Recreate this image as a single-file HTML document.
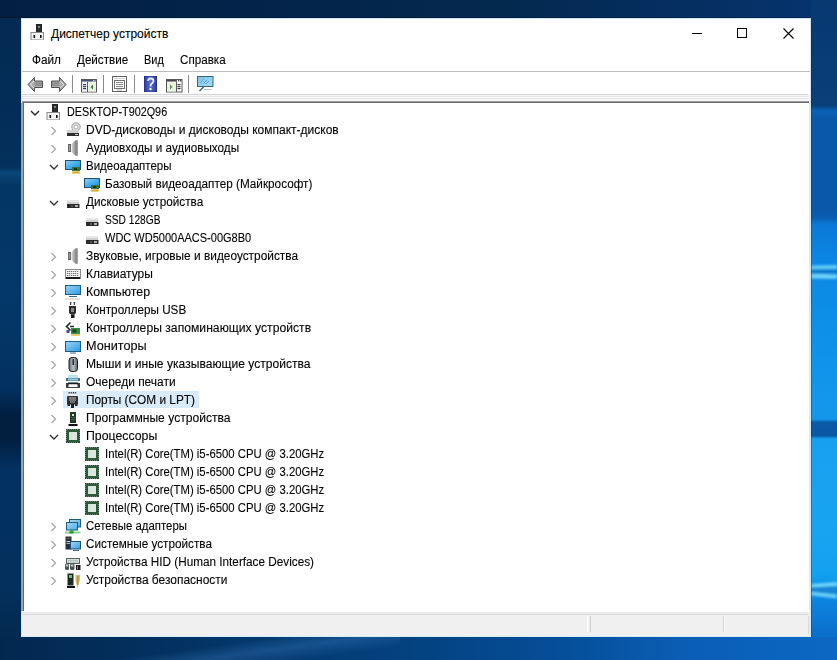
<!DOCTYPE html>
<html><head><meta charset="utf-8"><style>
html,body{margin:0;padding:0;width:837px;height:660px;overflow:hidden;background:#06305c;font-family:"Liberation Sans", sans-serif;}
span{-webkit-text-stroke:0.1px #000}
.a{position:absolute}
svg{display:block}
</style></head><body>
<div class="a" style="left:0;top:0;width:837px;height:660px;background:#05305c"></div>
<div class="a" style="left:0;top:0;width:837px;height:18px;background:linear-gradient(90deg,#032043 0%,#03244b 35%,#04294f 60%,#063470 100%)"></div>
<div class="a" style="left:0;top:17px;width:837px;height:1px;background:rgba(0,0,0,0.25)"></div>
<div class="a" style="left:0;top:18px;width:21px;height:619px;background:linear-gradient(180deg,#032a52 0%,#03305c 24%,#0a4678 25%,#043664 27%,#04386a 45%,#03315f 60%,#021f40 64%,#021f40 68%,#033262 73%,#03305c 92%,#032a50 100%)"></div>
<div class="a" style="left:811px;top:0;width:26px;height:660px;background:linear-gradient(180deg,#083870 0%,#08407a 16%,#0a62b8 16.8%,#0a58aa 18%,#0a58aa 32%,#0a5eb4 33%,#0a78d8 34%,#0c88e4 40%,#0e94ea 55%,#1398ec 63.5%,#0a5aa8 64%,#0a58a4 66%,#18a0f0 66.5%,#18a4f0 80%,#12a0f0 87%,#0c84e0 91%,#0a70cc 96%,#0a68c4 100%)"></div>
<svg class="a" style="position:absolute;left:811px;top:255px" width="26" height="30" viewBox="0 0 26 30"><defs><filter id="bl" x="-20%" y="-50%" width="140%" height="200%"><feGaussianBlur stdDeviation="0.8"/></filter></defs>
<g filter="url(#bl)"><path d="M0 10.5 L26 10 L26 14 L0 14.5 Z" fill="#6cd0fa" opacity="0.9"/><path d="M0 18.5 L26 19.5 L26 24 L0 23.5 Z" fill="#78d8fc" opacity="0.9"/><rect x="0" y="14.5" width="26" height="4" fill="#0a6ab8" opacity="0.5"/></g></svg>
<svg class="a" style="position:absolute;left:811px;top:575px" width="26" height="30" viewBox="0 0 26 30"><g filter="url(#bl)"><path d="M0 9 L26 7 L26 11 L0 12.5 Z" fill="#74d8fc" opacity="0.95"/><path d="M0 16.5 L26 19.5 L26 23.5 L0 20.5 Z" fill="#70d4fa" opacity="0.9"/><path d="M0 12.5 L26 11 L26 19.5 L0 16.5 Z" fill="#1a80c8" opacity="0.6"/></g></svg>
<div class="a" style="left:0;top:637px;width:837px;height:23px;background:linear-gradient(90deg,#032850 0%,#03305e 18%,#043a70 33%,#044280 50%,#054e98 67%,#0a5cb2 80%,#0b68c4 100%)"></div>
<div class="a" style="left:120px;top:637px;width:280px;height:23px;background:linear-gradient(172deg,rgba(70,140,210,0) 35%,rgba(70,140,210,0.28) 55%,rgba(70,140,210,0) 78%)"></div>
<!-- window -->
<div class="a" style="left:21px;top:18px;width:790px;height:619px;background:#fff;box-shadow:0 0 0 0 #000"></div>
<div class="a" style="left:21px;top:18px;width:788px;height:617px;border:1px solid #cfe6f6"></div>
<!-- title -->
<div style="position:absolute;left:30px;top:24px;width:16px;height:16px"><svg width="16" height="16" viewBox="0 0 16 16" >
<rect x="6.5" y="0.5" width="5" height="8" fill="#2a302c" stroke="#222"/>
<rect x="8" y="2" width="2" height="2" fill="#7a8a7a"/>
<rect x="1" y="8.5" width="12.5" height="7.5" fill="#f2f2f2" stroke="#8c8c8c"/>
<rect x="3.5" y="11" width="1.6" height="3" fill="#111"/>
<rect x="10" y="11" width="1.6" height="3" fill="#111"/>
</svg></div>
<span class="a" style="left:51px;top:26px;font-size:12px;line-height:16px;color:#000;white-space:nowrap">Диспетчер устройств</span>
<div class="a" style="left:692px;top:33px;width:10px;height:1px;background:#000"></div>
<div class="a" style="left:737px;top:28px;width:8px;height:8px;border:1px solid #000"></div>
<svg class="a" style="position:absolute;left:782.5px;top:27.5px" width="11" height="11" viewBox="0 0 11 11"><path d="M0.5 0.5 L10.5 10.5 M10.5 0.5 L0.5 10.5" stroke="#000" stroke-width="1.1"/></svg>
<!-- menu -->
<span class="a" style="left:32px;top:52px;font-size:12px;line-height:16px;white-space:nowrap;transform-origin:0 0;transform:scaleX(0.98)">Файл</span>
<span class="a" style="left:77px;top:52px;font-size:12px;line-height:16px;white-space:nowrap;transform-origin:0 0;transform:scaleX(0.97)">Действие</span>
<span class="a" style="left:143.5px;top:52px;font-size:12px;line-height:16px;white-space:nowrap;transform-origin:0 0;transform:scaleX(0.91)">Вид</span>
<span class="a" style="left:179.5px;top:52px;font-size:12px;line-height:16px;white-space:nowrap;transform-origin:0 0;transform:scaleX(0.97)">Справка</span>
<div class="a" style="left:22px;top:71px;width:788px;height:1px;background:#bdbdbd"></div>
<!-- toolbar -->
<svg width="17" height="17" viewBox="0 0 17 17" style="position:absolute;left:26.5px;top:76px">
<path d="M1 8.5 L7.5 1.5 V5 H15.5 V11.5 H7.5 V15.5 Z" fill="#ababab" stroke="#505050" stroke-width="1"/>
<path d="M8 7 H15 M8 9 H15" stroke="#7a7a7a" stroke-width="1"/><path d="M3 8.5 L7 5 M3 8.5 L7 12" stroke="#f4f4f4" stroke-width="0.8"/>
</svg><svg width="17" height="17" viewBox="0 0 17 17" style="position:absolute;left:49.5px;top:76px">
<path d="M16 8.5 L9.5 1.5 V5 H1.5 V11.5 H9.5 V15.5 Z" fill="#ababab" stroke="#505050" stroke-width="1"/>
<path d="M2 7 H9 M2 9 H9" stroke="#7a7a7a" stroke-width="1"/><path d="M14 8.5 L10 5 M14 8.5 L10 12" stroke="#f4f4f4" stroke-width="0.8"/>
</svg><div style="position:absolute;left:72px;top:75px;width:1px;height:18px;background:#8a8a8a"></div><svg width="17" height="14" viewBox="0 0 17 14" style="position:absolute;left:81px;top:79px">
<rect x="0.5" y="0.5" width="15" height="12.5" fill="#fff" stroke="#585858"/>
<rect x="1" y="1" width="14" height="1.6" fill="#4a4e72"/>
<rect x="12" y="1.3" width="1" height="1" fill="#fff"/><rect x="13.5" y="1.3" width="1" height="1" fill="#fff"/>
<rect x="1" y="3" width="5" height="9.5" fill="#eef0f8"/>
<rect x="2" y="5" width="3" height="1.2" fill="#3a3a4a"/><rect x="2" y="7" width="3" height="1.2" fill="#3a3a4a"/><rect x="2" y="9" width="3" height="1.2" fill="#3a3a4a"/>
<rect x="6" y="3" width="1" height="10" fill="#585858"/>
<rect x="7" y="3.5" width="8" height="9" fill="#e6f4dc"/>
<path d="M12 5.5 L9.5 8 L12 10.5 Z" fill="#3a7a3a"/>
</svg><div style="position:absolute;left:103px;top:75px;width:1px;height:18px;background:#8a8a8a"></div><svg width="16" height="16" viewBox="0 0 16 16" style="position:absolute;left:112px;top:76px">
<rect x="0.5" y="0.5" width="14" height="15" fill="#fff" stroke="#606060"/>
<rect x="2" y="2" width="11" height="1" fill="#d0d0d0"/>
<rect x="2.5" y="4.5" width="10" height="8" fill="#fafafa" stroke="#707070"/>
<rect x="4" y="6" width="7" height="1" fill="#8a8a8a"/><rect x="4" y="8" width="7" height="1" fill="#8a8a8a"/><rect x="4" y="10" width="7" height="1" fill="#8a8a8a"/>
<rect x="5" y="13.5" width="5" height="1" fill="#b0b0b0"/>
</svg><div style="position:absolute;left:134px;top:75px;width:1px;height:18px;background:#8a8a8a"></div><svg width="13" height="16" viewBox="0 0 13 16" style="position:absolute;left:144px;top:76px">
<defs><linearGradient id="hlp" x1="0" y1="0" x2="1" y2="0"><stop offset="0" stop-color="#2a3aa8"/><stop offset="0.5" stop-color="#5a6ec8"/><stop offset="1" stop-color="#2a3a90"/></linearGradient></defs>
<rect x="0" y="0" width="13" height="16" fill="url(#hlp)"/>
<rect x="0" y="0" width="13" height="16" fill="none" stroke="#1a2060" stroke-width="0.8"/>
<path d="M4 5 Q4 2.5 6.8 2.5 Q9.5 2.5 9.5 5 Q9.5 6.8 7.5 7.8 Q6.5 8.5 6.5 10.5" fill="none" stroke="#dfe8ff" stroke-width="1.8"/>
<rect x="5.5" y="12" width="2" height="2" fill="#eef4ff"/>
</svg><svg width="17" height="14" viewBox="0 0 17 14" style="position:absolute;left:166px;top:79px">
<rect x="0.5" y="0.5" width="15.5" height="12.5" fill="#fff" stroke="#585858"/>
<rect x="1" y="1" width="10" height="1.6" fill="#4a4a4a"/>
<rect x="12" y="1" width="1.3" height="1.5" fill="#4a4a4a"/><rect x="14" y="1" width="1.3" height="1.5" fill="#4a4a4a"/>
<rect x="1" y="3.5" width="9" height="9" fill="#e8f2dc"/>
<path d="M4 5.5 L6.5 8 L4 10.5 Z" fill="#6a8a5a"/>
<rect x="10" y="3" width="1" height="10" fill="#585858"/>
<rect x="11.5" y="5" width="3" height="1.2" fill="#3a3a3a"/><rect x="11.5" y="7" width="3" height="1.2" fill="#3a3a3a"/><rect x="11.5" y="9" width="3" height="1.2" fill="#3a3a3a"/>
</svg><div style="position:absolute;left:188px;top:75px;width:1px;height:18px;background:#8a8a8a"></div><svg width="17" height="16" viewBox="0 0 17 16" style="position:absolute;left:197px;top:76px">
<defs><linearGradient id="mon" x1="0" y1="0" x2="1" y2="1"><stop offset="0" stop-color="#7cc4ec"/><stop offset="1" stop-color="#a8dcf6"/></linearGradient></defs>
<rect x="0.5" y="0.5" width="15.5" height="10" fill="url(#mon)" stroke="#3a6478"/>
<path d="M3 7 L7 3 M6 8 L10 4 M9 8 L12 5" stroke="#5aa8d8" stroke-width="1"/>
<path d="M7 10.5 L2.5 15" stroke="#4a6470" stroke-width="1.5"/>
<path d="M7 13.5 H15" stroke="#b8c8d0" stroke-width="1"/>
</svg>
<div class="a" style="left:22px;top:94px;width:786px;height:1px;background:#d4d4d4"></div>
<div class="a" style="left:22px;top:95px;width:788px;height:6px;background:#f6f6f6"></div>
<div class="a" style="left:22px;top:96px;width:786px;height:1px;background:#e6e6e6"></div>
<div class="a" style="left:22px;top:98px;width:786px;height:1px;background:#e8e8e8"></div>
<!-- tree border -->
<div class="a" style="left:22px;top:101px;width:788px;height:511px;background:#a0a0a0"></div>
<div class="a" style="left:23px;top:102px;width:786px;height:509px;background:#696969"></div>
<div class="a" style="left:22px;top:611px;width:788px;height:1px;background:#fff"></div>
<div class="a" style="left:809px;top:101px;width:1px;height:511px;background:#fff"></div>
<div class="a" style="left:24px;top:103px;width:785px;height:508px;background:#fff"></div>
<div class="a" style="left:21px;top:103px;width:1px;height:508px;background:#86a4c2"></div>
<div class="a" style="left:22px;top:103px;width:1px;height:508px;background:#94a8bc"></div>
<div class="a" style="left:23px;top:103px;width:1px;height:508px;background:#5e6a76"></div>
<div class="a" style="left:809px;top:103px;width:2px;height:508px;background:#d4eef8"></div>
<div class="a" style="left:811px;top:18px;width:1px;height:619px;background:rgba(10,40,80,0.35)"></div>
<svg style="position:absolute;left:29.5px;top:110px" width="10" height="7" viewBox="0 0 10 7"><path d="M1 1 L5 5 L9 1" fill="none" stroke="#262626" stroke-width="1.4"/></svg><div style="position:absolute;left:46px;top:104px;width:16px;height:16px"><svg width="16" height="16" viewBox="0 0 16 16" >
<rect x="6.5" y="0.5" width="5" height="8" fill="#2a302c" stroke="#222"/>
<rect x="8" y="2" width="2" height="2" fill="#7a8a7a"/>
<rect x="1" y="8.5" width="12.5" height="7.5" fill="#f2f2f2" stroke="#8c8c8c"/>
<rect x="3.5" y="11" width="1.6" height="3" fill="#111"/>
<rect x="10" y="11" width="1.6" height="3" fill="#111"/>
</svg></div><span id="t0" style="position:absolute;left:67px;top:103px;font-size:12px;line-height:18px;color:#000;white-space:nowrap;transform-origin:0 0;transform:scaleX(0.9009)">DESKTOP-T902Q96</span><svg style="position:absolute;left:50px;top:126px" width="8" height="10" viewBox="0 0 8 10"><path d="M1.5 1 L5.5 5 L1.5 9" fill="none" stroke="#a6a6a6" stroke-width="1.3"/></svg><div style="position:absolute;left:65px;top:122px;width:16px;height:16px"><svg width="16" height="16" viewBox="0 0 16 16" >
<circle cx="11" cy="5" r="4.2" fill="#e6e6e6" stroke="#9a9a9a" stroke-width="1"/>
<circle cx="11" cy="5" r="2" fill="#fff" stroke="#a8a8a8" stroke-width="1"/>
<rect x="2" y="8" width="12" height="3" fill="#d0d0d0"/>
<rect x="2" y="11" width="12" height="3" fill="#2e2e2e"/>
<rect x="10" y="12" width="3" height="1" fill="#cfcfcf"/>
</svg></div><span id="t1" style="position:absolute;left:86px;top:121px;font-size:12px;line-height:18px;color:#000;white-space:nowrap;transform-origin:0 0;transform:scaleX(1.0004)">DVD-дисководы и дисководы компакт-дисков</span><svg style="position:absolute;left:50px;top:144px" width="8" height="10" viewBox="0 0 8 10"><path d="M1.5 1 L5.5 5 L1.5 9" fill="none" stroke="#a6a6a6" stroke-width="1.3"/></svg><div style="position:absolute;left:65px;top:140px;width:16px;height:16px"><svg width="16" height="16" viewBox="0 0 16 16" >
<defs><linearGradient id="spk" x1="0" x2="1"><stop offset="0" stop-color="#d8d8d8"/><stop offset="1" stop-color="#6e6e6e"/></linearGradient></defs>
<rect x="3" y="4" width="3" height="8" fill="#5e5e5e"/>
<rect x="3.8" y="5" width="1.5" height="6" fill="#9a9a9a"/>
<path d="M6.5 4 L10 0.5 L12.5 0.5 L12.5 15.5 L10 15.5 L6.5 12 Z" fill="url(#spk)"/>
<rect x="10.5" y="0.5" width="2" height="15" fill="#8a8a8a"/>
</svg></div><span id="t2" style="position:absolute;left:86px;top:139px;font-size:12px;line-height:18px;color:#000;white-space:nowrap;transform-origin:0 0;transform:scaleX(0.9756)">Аудиовходы и аудиовыходы</span><svg style="position:absolute;left:48.5px;top:164px" width="10" height="7" viewBox="0 0 10 7"><path d="M1 1 L5 5 L9 1" fill="none" stroke="#333" stroke-width="1.4"/></svg><div style="position:absolute;left:65px;top:158px;width:16px;height:16px"><svg width="16" height="16" viewBox="0 0 16 16" >
<defs><linearGradient id="scr" x1="0" y1="0" x2="1" y2="1"><stop offset="0" stop-color="#8fd3f7"/><stop offset="0.6" stop-color="#3aa7e8"/><stop offset="1" stop-color="#2a8fd0"/></linearGradient></defs>
<rect x="0.5" y="2.5" width="15" height="9" fill="url(#scr)" stroke="#1f4f73"/>
<rect x="7" y="9" width="8" height="4" fill="#3c6e3c"/>
<rect x="9" y="10" width="3" height="2" fill="#0b3a16"/>
<rect x="7" y="13" width="8" height="3" fill="#e8d27a"/>
<rect x="8" y="14" width="6" height="1" fill="#c9a640"/>
</svg></div><span id="t3" style="position:absolute;left:86px;top:157px;font-size:12px;line-height:18px;color:#000;white-space:nowrap;transform-origin:0 0;transform:scaleX(0.9575)">Видеоадаптеры</span><div style="position:absolute;left:84px;top:176px;width:16px;height:16px"><svg width="16" height="16" viewBox="0 0 16 16" >
<defs><linearGradient id="scr" x1="0" y1="0" x2="1" y2="1"><stop offset="0" stop-color="#8fd3f7"/><stop offset="0.6" stop-color="#3aa7e8"/><stop offset="1" stop-color="#2a8fd0"/></linearGradient></defs>
<rect x="0.5" y="2.5" width="15" height="9" fill="url(#scr)" stroke="#1f4f73"/>
<rect x="7" y="9" width="8" height="4" fill="#3c6e3c"/>
<rect x="9" y="10" width="3" height="2" fill="#0b3a16"/>
<rect x="7" y="13" width="8" height="3" fill="#e8d27a"/>
<rect x="8" y="14" width="6" height="1" fill="#c9a640"/>
</svg></div><span id="t4" style="position:absolute;left:105px;top:175px;font-size:12px;line-height:18px;color:#000;white-space:nowrap;transform-origin:0 0;transform:scaleX(0.9790)">Базовый видеоадаптер (Майкрософт)</span><svg style="position:absolute;left:48.5px;top:200px" width="10" height="7" viewBox="0 0 10 7"><path d="M1 1 L5 5 L9 1" fill="none" stroke="#333" stroke-width="1.4"/></svg><div style="position:absolute;left:65px;top:194px;width:16px;height:16px"><svg width="16" height="16" viewBox="0 0 16 16" >
<rect x="2" y="6.5" width="12" height="3.5" fill="#cfcfcf"/>
<rect x="2.5" y="7" width="11" height="1" fill="#e8e8e8"/>
<rect x="2" y="10" width="12.5" height="4" fill="#2a2a2a"/>
<rect x="6" y="11" width="2" height="2" fill="#555"/>
<rect x="10" y="11" width="3" height="2" fill="#b0b0b0"/>
</svg></div><span id="t5" style="position:absolute;left:86px;top:193px;font-size:12px;line-height:18px;color:#000;white-space:nowrap;transform-origin:0 0;transform:scaleX(0.9792)">Дисковые устройства</span><div style="position:absolute;left:84px;top:212px;width:16px;height:16px"><svg width="16" height="16" viewBox="0 0 16 16" >
<rect x="2" y="6.5" width="12" height="3.5" fill="#cfcfcf"/>
<rect x="2.5" y="7" width="11" height="1" fill="#e8e8e8"/>
<rect x="2" y="10" width="12.5" height="4" fill="#2a2a2a"/>
<rect x="6" y="11" width="2" height="2" fill="#555"/>
<rect x="10" y="11" width="3" height="2" fill="#b0b0b0"/>
</svg></div><span id="t6" style="position:absolute;left:105px;top:211px;font-size:12px;line-height:18px;color:#000;white-space:nowrap;transform-origin:0 0;transform:scaleX(0.8484)">SSD 128GB</span><div style="position:absolute;left:84px;top:230px;width:16px;height:16px"><svg width="16" height="16" viewBox="0 0 16 16" >
<rect x="2" y="6.5" width="12" height="3.5" fill="#cfcfcf"/>
<rect x="2.5" y="7" width="11" height="1" fill="#e8e8e8"/>
<rect x="2" y="10" width="12.5" height="4" fill="#2a2a2a"/>
<rect x="6" y="11" width="2" height="2" fill="#555"/>
<rect x="10" y="11" width="3" height="2" fill="#b0b0b0"/>
</svg></div><span id="t7" style="position:absolute;left:105px;top:229px;font-size:12px;line-height:18px;color:#000;white-space:nowrap;transform-origin:0 0;transform:scaleX(0.9170)">WDC WD5000AACS-00G8B0</span><svg style="position:absolute;left:50px;top:252px" width="8" height="10" viewBox="0 0 8 10"><path d="M1.5 1 L5.5 5 L1.5 9" fill="none" stroke="#a6a6a6" stroke-width="1.3"/></svg><div style="position:absolute;left:65px;top:248px;width:16px;height:16px"><svg width="16" height="16" viewBox="0 0 16 16" >
<defs><linearGradient id="spk" x1="0" x2="1"><stop offset="0" stop-color="#d8d8d8"/><stop offset="1" stop-color="#6e6e6e"/></linearGradient></defs>
<rect x="3" y="4" width="3" height="8" fill="#5e5e5e"/>
<rect x="3.8" y="5" width="1.5" height="6" fill="#9a9a9a"/>
<path d="M6.5 4 L10 0.5 L12.5 0.5 L12.5 15.5 L10 15.5 L6.5 12 Z" fill="url(#spk)"/>
<rect x="10.5" y="0.5" width="2" height="15" fill="#8a8a8a"/>
</svg></div><span id="t8" style="position:absolute;left:86px;top:247px;font-size:12px;line-height:18px;color:#000;white-space:nowrap;transform-origin:0 0;transform:scaleX(0.9892)">Звуковые, игровые и видеоустройства</span><svg style="position:absolute;left:50px;top:270px" width="8" height="10" viewBox="0 0 8 10"><path d="M1.5 1 L5.5 5 L1.5 9" fill="none" stroke="#a6a6a6" stroke-width="1.3"/></svg><div style="position:absolute;left:65px;top:266px;width:16px;height:16px"><svg width="16" height="16" viewBox="0 0 16 16" >
<rect x="0.5" y="3.5" width="15" height="9" fill="#f2f2f2" stroke="#8a8a8a"/>
<path d="M2 5.5 H14 M2 7.5 H14 M2 9.5 H14" stroke="#6a6a6a" stroke-width="1" stroke-dasharray="1.2 0.8"/>
<rect x="1" y="11" width="14" height="2" fill="#1a1a1a"/>
</svg></div><span id="t9" style="position:absolute;left:86px;top:265px;font-size:12px;line-height:18px;color:#000;white-space:nowrap;transform-origin:0 0;transform:scaleX(0.9985)">Клавиатуры</span><svg style="position:absolute;left:50px;top:288px" width="8" height="10" viewBox="0 0 8 10"><path d="M1.5 1 L5.5 5 L1.5 9" fill="none" stroke="#a6a6a6" stroke-width="1.3"/></svg><div style="position:absolute;left:65px;top:284px;width:16px;height:16px"><svg width="16" height="16" viewBox="0 0 16 16" >
<defs><linearGradient id="scr2" x1="0" y1="0" x2="1" y2="1"><stop offset="0" stop-color="#9ad8f8"/><stop offset="1" stop-color="#2e98e0"/></linearGradient></defs>
<rect x="0.5" y="1.5" width="15" height="9" fill="url(#scr2)" stroke="#1d5e86"/>
<rect x="4" y="12" width="8" height="1" fill="#2a6a8a"/>
<rect x="0" y="14.5" width="15" height="1" fill="#c9b49a" opacity="0.8"/>
</svg></div><span id="t10" style="position:absolute;left:86px;top:283px;font-size:12px;line-height:18px;color:#000;white-space:nowrap;transform-origin:0 0;transform:scaleX(1.0328)">Компьютер</span><svg style="position:absolute;left:50px;top:306px" width="8" height="10" viewBox="0 0 8 10"><path d="M1.5 1 L5.5 5 L1.5 9" fill="none" stroke="#a6a6a6" stroke-width="1.3"/></svg><div style="position:absolute;left:65px;top:302px;width:16px;height:16px"><svg width="16" height="16" viewBox="0 0 16 16" >
<rect x="5" y="0" width="1.5" height="3" fill="#3a4250"/>
<rect x="8.5" y="0" width="1.5" height="3" fill="#3a4250"/>
<rect x="6.5" y="1" width="2" height="3" fill="#fff"/>
<path d="M4 4 H11 V11 L9.5 12.5 H6 L4 11 Z" fill="#2d2d2d"/>
<rect x="6" y="6" width="3" height="4" fill="#8a8a8a"/>
<rect x="6" y="12.5" width="3.5" height="3.5" fill="#151515"/>
</svg></div><span id="t11" style="position:absolute;left:86px;top:301px;font-size:12px;line-height:18px;color:#000;white-space:nowrap;transform-origin:0 0;transform:scaleX(0.9743)">Контроллеры USB</span><svg style="position:absolute;left:50px;top:324px" width="8" height="10" viewBox="0 0 8 10"><path d="M1.5 1 L5.5 5 L1.5 9" fill="none" stroke="#a6a6a6" stroke-width="1.3"/></svg><div style="position:absolute;left:65px;top:320px;width:16px;height:16px"><svg width="16" height="16" viewBox="0 0 16 16" >
<path d="M5.5 2.5 L1.5 6.5 L5.5 10.5" fill="none" stroke="#1c2a20" stroke-width="1.6"/>
<path d="M5 6.5 H9" stroke="#1c2a20" stroke-width="1.5"/>
<rect x="1.5" y="10" width="3" height="3" fill="#4a4a8a"/>
<rect x="6" y="8" width="9" height="6" fill="#3c8a4a"/>
<rect x="7.5" y="9.5" width="4" height="3" fill="#0d4a1a"/>
<rect x="6" y="14" width="9" height="2" fill="#e8d070"/>
</svg></div><span id="t12" style="position:absolute;left:86px;top:319px;font-size:12px;line-height:18px;color:#000;white-space:nowrap;transform-origin:0 0;transform:scaleX(1.0141)">Контроллеры запоминающих устройств</span><svg style="position:absolute;left:50px;top:342px" width="8" height="10" viewBox="0 0 8 10"><path d="M1.5 1 L5.5 5 L1.5 9" fill="none" stroke="#a6a6a6" stroke-width="1.3"/></svg><div style="position:absolute;left:65px;top:338px;width:16px;height:16px"><svg width="16" height="16" viewBox="0 0 16 16" >
<defs><linearGradient id="scr3" x1="0" y1="0" x2="1" y2="1"><stop offset="0" stop-color="#9ad8f8"/><stop offset="1" stop-color="#2e98e0"/></linearGradient></defs>
<rect x="0.5" y="3.5" width="15" height="10" fill="url(#scr3)" stroke="#1d5e86"/>
<rect x="5" y="14.5" width="6" height="1" fill="#3a6a8a"/>
</svg></div><span id="t13" style="position:absolute;left:86px;top:337px;font-size:12px;line-height:18px;color:#000;white-space:nowrap;transform-origin:0 0;transform:scaleX(1.0536)">Мониторы</span><svg style="position:absolute;left:50px;top:360px" width="8" height="10" viewBox="0 0 8 10"><path d="M1.5 1 L5.5 5 L1.5 9" fill="none" stroke="#a6a6a6" stroke-width="1.3"/></svg><div style="position:absolute;left:65px;top:356px;width:16px;height:16px"><svg width="16" height="16" viewBox="0 0 16 16" >
<defs><linearGradient id="ms" x1="0" x2="1"><stop offset="0" stop-color="#6a7078"/><stop offset="0.5" stop-color="#b8c0c8"/><stop offset="1" stop-color="#5a6068"/></linearGradient></defs>
<rect x="4" y="1.5" width="8.5" height="14" rx="3" ry="3" fill="url(#ms)" stroke="#1a1a1a" stroke-width="1"/>
<rect x="7.5" y="3" width="1.5" height="6" fill="#1e2a36"/>
</svg></div><span id="t14" style="position:absolute;left:86px;top:355px;font-size:12px;line-height:18px;color:#000;white-space:nowrap;transform-origin:0 0;transform:scaleX(1.0081)">Мыши и иные указывающие устройства</span><svg style="position:absolute;left:50px;top:378px" width="8" height="10" viewBox="0 0 8 10"><path d="M1.5 1 L5.5 5 L1.5 9" fill="none" stroke="#a6a6a6" stroke-width="1.3"/></svg><div style="position:absolute;left:65px;top:374px;width:16px;height:16px"><svg width="16" height="16" viewBox="0 0 16 16" >
<rect x="3" y="1" width="10" height="3" fill="#bfe3ee"/>
<rect x="1" y="4" width="14" height="3" fill="#3e7184"/>
<rect x="3" y="4.5" width="10" height="2" fill="#9ccbdc"/>
<rect x="1" y="7" width="14" height="2" fill="#e8f4f8"/>
<rect x="3" y="8.5" width="10" height="2" fill="#0e1e20"/>
<rect x="1" y="9" width="2.5" height="4.5" fill="#3a3a3a"/>
<rect x="12.5" y="9" width="2.5" height="4.5" fill="#3a3a3a"/>
<rect x="4" y="10.5" width="8" height="3" fill="#fafafa"/>
<rect x="1" y="13" width="14" height="1" fill="#444"/>
</svg></div><span id="t15" style="position:absolute;left:86px;top:373px;font-size:12px;line-height:18px;color:#000;white-space:nowrap;transform-origin:0 0;transform:scaleX(0.9955)">Очереди печати</span><div style="position:absolute;left:63px;top:391px;width:136px;height:17px;background:#d9ebf9"></div><svg style="position:absolute;left:50px;top:396px" width="8" height="10" viewBox="0 0 8 10"><path d="M1.5 1 L5.5 5 L1.5 9" fill="none" stroke="#a6a6a6" stroke-width="1.3"/></svg><div style="position:absolute;left:65px;top:392px;width:16px;height:16px"><svg width="16" height="16" viewBox="0 0 16 16" >
<path d="M3.5 0.5 H11.5" stroke="#3a3a3a" stroke-width="2" stroke-dasharray="1.3 0.8"/>
<rect x="4" y="2" width="7" height="2" fill="#f0f0f0"/>
<rect x="2" y="4" width="11" height="8.5" rx="1" fill="#303030"/>
<rect x="2.5" y="11" width="2.5" height="3" fill="#2a2a2a"/>
<rect x="10" y="11" width="2.5" height="3" fill="#2a2a2a"/>
<rect x="4" y="5.5" width="7" height="1" fill="#c8c8c8"/>
<rect x="4" y="7.5" width="7" height="1" fill="#b8b8b8"/>
<rect x="5" y="9.5" width="5" height="1" fill="#a8a8a8"/>
<rect x="6" y="12" width="3" height="4" fill="#1e1e1e"/>
</svg></div><span id="t16" style="position:absolute;left:86px;top:391px;font-size:12px;line-height:18px;color:#000;white-space:nowrap;transform-origin:0 0;transform:scaleX(0.9862)">Порты (COM и LPT)</span><svg style="position:absolute;left:50px;top:414px" width="8" height="10" viewBox="0 0 8 10"><path d="M1.5 1 L5.5 5 L1.5 9" fill="none" stroke="#a6a6a6" stroke-width="1.3"/></svg><div style="position:absolute;left:65px;top:410px;width:16px;height:16px"><svg width="16" height="16" viewBox="0 0 16 16" >
<rect x="5" y="2" width="6" height="11" fill="#1f3a26"/>
<rect x="7" y="4" width="2" height="2" fill="#c8f0c8"/>
<rect x="6" y="7" width="4" height="1" fill="#4a5a4a"/>
<rect x="6" y="9" width="4" height="1" fill="#4a5a4a"/>
<rect x="5" y="13" width="6" height="1" fill="#f0f0f0"/>
<rect x="3.5" y="14" width="9" height="2" fill="#111"/>
</svg></div><span id="t17" style="position:absolute;left:86px;top:409px;font-size:12px;line-height:18px;color:#000;white-space:nowrap;transform-origin:0 0;transform:scaleX(1.0092)">Программные устройства</span><svg style="position:absolute;left:48.5px;top:434px" width="10" height="7" viewBox="0 0 10 7"><path d="M1 1 L5 5 L9 1" fill="none" stroke="#333" stroke-width="1.4"/></svg><div style="position:absolute;left:65px;top:428px;width:16px;height:16px"><svg width="16" height="16" viewBox="0 0 16 16" >
<rect x="1.5" y="1.5" width="13" height="13" fill="#2f5a3a" stroke="#1f4a2a"/>
<rect x="4" y="4" width="8" height="8" fill="#dfe6df"/>
<rect x="4" y="4" width="3" height="8" fill="#cfe8d4"/>
<path d="M2 1 H14 M2 15 H14 M1 2 V14 M15 2 V14" stroke="#fff" stroke-width="1" stroke-dasharray="1 1" opacity="0.7"/>
</svg></div><span id="t18" style="position:absolute;left:86px;top:427px;font-size:12px;line-height:18px;color:#000;white-space:nowrap;transform-origin:0 0;transform:scaleX(1.0250)">Процессоры</span><div style="position:absolute;left:84px;top:446px;width:16px;height:16px"><svg width="16" height="16" viewBox="0 0 16 16" >
<rect x="1.5" y="1.5" width="13" height="13" fill="#2f5a3a" stroke="#1f4a2a"/>
<rect x="4" y="4" width="8" height="8" fill="#dfe6df"/>
<rect x="4" y="4" width="3" height="8" fill="#cfe8d4"/>
<path d="M2 1 H14 M2 15 H14 M1 2 V14 M15 2 V14" stroke="#fff" stroke-width="1" stroke-dasharray="1 1" opacity="0.7"/>
</svg></div><span id="t19" style="position:absolute;left:105px;top:445px;font-size:12px;line-height:18px;color:#000;white-space:nowrap;transform-origin:0 0;transform:scaleX(0.9437)">Intel(R) Core(TM) i5-6500 CPU @ 3.20GHz</span><div style="position:absolute;left:84px;top:464px;width:16px;height:16px"><svg width="16" height="16" viewBox="0 0 16 16" >
<rect x="1.5" y="1.5" width="13" height="13" fill="#2f5a3a" stroke="#1f4a2a"/>
<rect x="4" y="4" width="8" height="8" fill="#dfe6df"/>
<rect x="4" y="4" width="3" height="8" fill="#cfe8d4"/>
<path d="M2 1 H14 M2 15 H14 M1 2 V14 M15 2 V14" stroke="#fff" stroke-width="1" stroke-dasharray="1 1" opacity="0.7"/>
</svg></div><span id="t20" style="position:absolute;left:105px;top:463px;font-size:12px;line-height:18px;color:#000;white-space:nowrap;transform-origin:0 0;transform:scaleX(0.9437)">Intel(R) Core(TM) i5-6500 CPU @ 3.20GHz</span><div style="position:absolute;left:84px;top:482px;width:16px;height:16px"><svg width="16" height="16" viewBox="0 0 16 16" >
<rect x="1.5" y="1.5" width="13" height="13" fill="#2f5a3a" stroke="#1f4a2a"/>
<rect x="4" y="4" width="8" height="8" fill="#dfe6df"/>
<rect x="4" y="4" width="3" height="8" fill="#cfe8d4"/>
<path d="M2 1 H14 M2 15 H14 M1 2 V14 M15 2 V14" stroke="#fff" stroke-width="1" stroke-dasharray="1 1" opacity="0.7"/>
</svg></div><span id="t21" style="position:absolute;left:105px;top:481px;font-size:12px;line-height:18px;color:#000;white-space:nowrap;transform-origin:0 0;transform:scaleX(0.9437)">Intel(R) Core(TM) i5-6500 CPU @ 3.20GHz</span><div style="position:absolute;left:84px;top:500px;width:16px;height:16px"><svg width="16" height="16" viewBox="0 0 16 16" >
<rect x="1.5" y="1.5" width="13" height="13" fill="#2f5a3a" stroke="#1f4a2a"/>
<rect x="4" y="4" width="8" height="8" fill="#dfe6df"/>
<rect x="4" y="4" width="3" height="8" fill="#cfe8d4"/>
<path d="M2 1 H14 M2 15 H14 M1 2 V14 M15 2 V14" stroke="#fff" stroke-width="1" stroke-dasharray="1 1" opacity="0.7"/>
</svg></div><span id="t22" style="position:absolute;left:105px;top:499px;font-size:12px;line-height:18px;color:#000;white-space:nowrap;transform-origin:0 0;transform:scaleX(0.9437)">Intel(R) Core(TM) i5-6500 CPU @ 3.20GHz</span><svg style="position:absolute;left:50px;top:522px" width="8" height="10" viewBox="0 0 8 10"><path d="M1.5 1 L5.5 5 L1.5 9" fill="none" stroke="#a6a6a6" stroke-width="1.3"/></svg><div style="position:absolute;left:65px;top:518px;width:16px;height:16px"><svg width="16" height="16" viewBox="0 0 16 16" >
<defs><linearGradient id="nw" x1="0" y1="0" x2="1" y2="1"><stop offset="0" stop-color="#a8dcf8"/><stop offset="1" stop-color="#4aa8e8"/></linearGradient></defs>
<rect x="4.5" y="1.5" width="11" height="7.5" fill="url(#nw)" stroke="#1f5a80"/>
<rect x="1.5" y="4.5" width="11" height="7.5" fill="url(#nw)" stroke="#1f5a80"/>
<rect x="5" y="12" width="3.5" height="2" fill="#3aa04a"/>
<rect x="-0.5" y="13.5" width="16" height="2" fill="#8ad890"/>
<rect x="4.5" y="13.5" width="4" height="2" fill="#2a8a3a"/>
</svg></div><span id="t23" style="position:absolute;left:86px;top:517px;font-size:12px;line-height:18px;color:#000;white-space:nowrap;transform-origin:0 0;transform:scaleX(0.9510)">Сетевые адаптеры</span><svg style="position:absolute;left:50px;top:540px" width="8" height="10" viewBox="0 0 8 10"><path d="M1.5 1 L5.5 5 L1.5 9" fill="none" stroke="#a6a6a6" stroke-width="1.3"/></svg><div style="position:absolute;left:65px;top:536px;width:16px;height:16px"><svg width="16" height="16" viewBox="0 0 16 16" >
<rect x="0.5" y="0.5" width="6" height="13" fill="#1f3040"/>
<rect x="1.5" y="1.5" width="4" height="2" fill="#5a4a3a"/>
<rect x="1.5" y="5" width="4" height="1" fill="#c8d8e0"/>
<rect x="1.5" y="7" width="4" height="1" fill="#a8b8c0"/>
<defs><linearGradient id="sy" x1="0" y1="0" x2="1" y2="1"><stop offset="0" stop-color="#a0dcfa"/><stop offset="1" stop-color="#3a9ae0"/></linearGradient></defs>
<rect x="5.5" y="5.5" width="10" height="7.5" fill="url(#sy)" stroke="#1d4e76"/>
<rect x="8" y="14" width="6" height="1" fill="#4a6a80"/>
</svg></div><span id="t24" style="position:absolute;left:86px;top:535px;font-size:12px;line-height:18px;color:#000;white-space:nowrap;transform-origin:0 0;transform:scaleX(0.9781)">Системные устройства</span><svg style="position:absolute;left:50px;top:558px" width="8" height="10" viewBox="0 0 8 10"><path d="M1.5 1 L5.5 5 L1.5 9" fill="none" stroke="#a6a6a6" stroke-width="1.3"/></svg><div style="position:absolute;left:65px;top:554px;width:16px;height:16px"><svg width="16" height="16" viewBox="0 0 16 16" >
<rect x="1.5" y="4.5" width="13" height="5" fill="#d4dcdc" stroke="#5a6060"/>
<path d="M3 6.5 H13 M3 8 H13" stroke="#9ab0b0" stroke-width="0.8" stroke-dasharray="1.5 0.7"/>
<rect x="0" y="9.5" width="4" height="6.5" rx="1.5" fill="#4a5454"/>
<rect x="0.8" y="10.5" width="2.4" height="2" fill="#c8d0d0"/>
<rect x="5" y="9.5" width="4.5" height="6.5" rx="1.5" fill="#4a5454"/>
<rect x="5.8" y="10.5" width="2.6" height="2" fill="#c8d0d0"/>
<rect x="11" y="11" width="4.5" height="5" fill="#1a1a1a"/>
<rect x="12" y="12" width="1" height="3.5" fill="#8a8a8a"/>
</svg></div><span id="t25" style="position:absolute;left:86px;top:553px;font-size:12px;line-height:18px;color:#000;white-space:nowrap;transform-origin:0 0;transform:scaleX(0.9792)">Устройства HID (Human Interface Devices)</span><svg style="position:absolute;left:50px;top:576px" width="8" height="10" viewBox="0 0 8 10"><path d="M1.5 1 L5.5 5 L1.5 9" fill="none" stroke="#a6a6a6" stroke-width="1.3"/></svg><div style="position:absolute;left:65px;top:572px;width:16px;height:16px"><svg width="16" height="16" viewBox="0 0 16 16" >
<rect x="2.5" y="1.5" width="6" height="12" fill="#1a2a1e"/>
<rect x="4" y="3" width="3" height="3" fill="#6ac06a"/>
<rect x="2" y="14" width="8" height="2" fill="#111"/>
<path d="M10.5 3 H15 V8 L13.5 12 L12.5 16 L11.5 12 L10.5 8 Z" fill="#d8b870"/>
<rect x="12" y="4" width="1.5" height="9" fill="#b89040"/>
</svg></div><span id="t26" style="position:absolute;left:86px;top:571px;font-size:12px;line-height:18px;color:#000;white-space:nowrap;transform-origin:0 0;transform:scaleX(0.9964)">Устройства безопасности</span>
<!-- status -->
<div class="a" style="left:22px;top:612px;width:788px;height:24px;background:#f0f0f0"></div>
<div class="a" style="left:22px;top:612px;width:786px;height:1px;background:#e6e6e6"></div>
<div class="a" style="left:22px;top:614px;width:786px;height:1px;background:#d9d9d9"></div>
<div class="a" style="left:587px;top:616px;width:1px;height:16px;background:#fff"></div>
<div class="a" style="left:590px;top:616px;width:1px;height:16px;background:#d0d0d0"></div>
<div class="a" style="left:723px;top:616px;width:1px;height:16px;background:#d0d0d0"></div>
<div class="a" style="left:724px;top:616px;width:1px;height:16px;background:#fff"></div>
<div class="a" style="left:808px;top:616px;width:1px;height:18px;background:#dcdcdc"></div>
<div class="a" style="left:809px;top:612px;width:2px;height:25px;background:#d4eef8"></div>
<div class="a" style="left:21px;top:636px;width:790px;height:1px;background:#d4eef8"></div>
</body></html>
